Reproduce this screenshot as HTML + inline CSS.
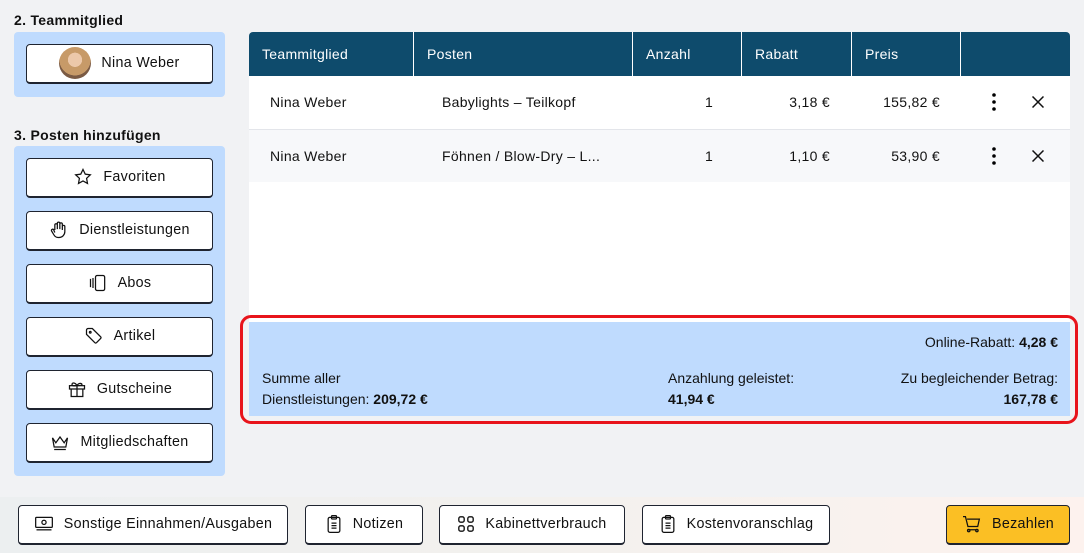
<!DOCTYPE html>
<html><head><meta charset="utf-8"><style>
*{box-sizing:border-box;margin:0;padding:0}
body{width:1084px;height:553px;background:#f1f2f4;font-family:"Liberation Sans",sans-serif;color:#111;position:relative;overflow:hidden;font-size:14px;letter-spacing:.3px}
.abs{position:absolute}
.h{font-weight:bold;font-size:14px}
.panel{background:#bfdbfe;border-radius:4px}
.btn{position:absolute;background:#fff;border:1px solid #1f2430;border-bottom-width:2px;border-radius:4px;display:flex;align-items:center;justify-content:center;gap:10px;font-size:14.3px;color:#111;padding-bottom:1px}
.btn svg{flex:none}
.th{position:absolute;top:32px;height:44px;color:#fff;font-size:14px;line-height:44px;padding-left:13px;border-right:1px solid #fff}
.cell{position:absolute;font-size:14px}
</style></head><body>
<div class="abs h" style="left:14px;top:12px">2. Teammitglied</div>
<div class="abs panel" style="left:14px;top:32px;width:211px;height:65px"></div>
<div class="btn" style="left:26px;top:44px;width:187px;height:40px">
<span style="width:32px;height:32px;border-radius:50%;background:radial-gradient(circle at 50% 40%,#ecc8aa 0 28%,#c79a68 29% 62%,#7a5a44 63%);display:inline-block"></span>Nina Weber</div>

<div class="abs h" style="left:14px;top:127px">3. Posten hinzufügen</div>
<div class="abs panel" style="left:14px;top:146px;width:211px;height:330px"></div>
<div class="btn" style="left:26px;top:158px;width:187px;height:40px"><svg width="20" height="20" viewBox="0 0 24 24" fill="none" stroke="#111" stroke-width="1.5"><path d="M12 3l2.7 5.6 6.1.8-4.5 4.2 1.1 6.1L12 16.8 6.6 19.7l1.1-6.1L3.2 9.4l6.1-.8z"/></svg>Favoriten</div>
<div class="btn" style="left:26px;top:211px;width:187px;height:40px"><svg width="20" height="20" viewBox="0 0 24 24" fill="none" stroke="#111" stroke-width="1.5"><path d="M7 12V6a1.5 1.5 0 013 0v5V4a1.5 1.5 0 013 0v7V5a1.5 1.5 0 013 0v7V8a1.5 1.5 0 013 0v6a7 7 0 01-7 7h-1a6 6 0 01-5-3l-3-5a1.5 1.5 0 012.5-1.5L7 15"/></svg>Dienstleistungen</div>
<div class="btn" style="left:26px;top:264px;width:187px;height:40px"><svg width="20" height="20" viewBox="0 0 24 24" fill="none" stroke="#111" stroke-width="1.5"><path d="M3 7v10M6 6v12"/><rect x="9" y="3" width="11" height="18" rx="2"/></svg>Abos</div>
<div class="btn" style="left:26px;top:317px;width:187px;height:40px"><svg width="20" height="20" viewBox="0 0 24 24" fill="none" stroke="#111" stroke-width="1.5"><path d="M3 5v5l10 10a1.5 1.5 0 002 0l5-5a1.5 1.5 0 000-2L10 3H5a2 2 0 00-2 2z"/><circle cx="7.5" cy="7.5" r="1"/></svg>Artikel</div>
<div class="btn" style="left:26px;top:370px;width:187px;height:40px"><svg width="20" height="20" viewBox="0 0 24 24" fill="none" stroke="#111" stroke-width="1.5"><rect x="3" y="8" width="18" height="4"/><path d="M5 12v9h14v-9M12 8v13M12 8c-2-4-6-4-6-1.5S10 8 12 8c2 0 6 0 6-1.5S14 4 12 8"/></svg>Gutscheine</div>
<div class="btn" style="left:26px;top:423px;width:187px;height:40px"><svg width="20" height="20" viewBox="0 0 24 24" fill="none" stroke="#111" stroke-width="1.5"><path d="M3 7l4 6 5-7 5 7 4-6-2 11H5zM5 21h14"/></svg>Mitgliedschaften</div>

<div class="abs" style="left:249px;top:32px;width:821px;height:384px;background:#fff;border-radius:4px 4px 0 0;overflow:hidden"></div>
<div class="abs" style="left:249px;top:32px;width:821px;height:44px;background:#0e4b6c;border-radius:4px 4px 0 0"></div>
<div class="th" style="left:249px;width:165px">Teammitglied</div>
<div class="th" style="left:414px;width:219px">Posten</div>
<div class="th" style="left:633px;width:109px">Anzahl</div>
<div class="th" style="left:742px;width:110px">Rabatt</div>
<div class="th" style="left:852px;width:109px">Preis</div>
<div class="abs" style="left:249px;top:129px;width:821px;height:53px;background:#f7f8fa;border-top:1px solid #e3e5ea"></div>
<div class="cell" style="left:270px;top:94px">Nina Weber</div>
<div class="cell" style="left:442px;top:94px">Babylights – Teilkopf</div>
<div class="cell" style="left:705px;top:94px">1</div>
<div class="cell" style="left:762px;top:94px;width:68px;text-align:right">3,18 €</div>
<div class="cell" style="left:850px;top:94px;width:90px;text-align:right">155,82 €</div>
<div class="cell" style="left:270px;top:148px">Nina Weber</div>
<div class="cell" style="left:442px;top:148px">Föhnen / Blow-Dry – L...</div>
<div class="cell" style="left:705px;top:148px">1</div>
<div class="cell" style="left:762px;top:148px;width:68px;text-align:right">1,10 €</div>
<div class="cell" style="left:850px;top:148px;width:90px;text-align:right">53,90 €</div>
<svg class="abs" style="left:986px;top:92px" width="16" height="20"><circle cx="8" cy="3" r="1.8"/><circle cx="8" cy="10" r="1.8"/><circle cx="8" cy="17" r="1.8"/></svg>
<svg class="abs" style="left:986px;top:146px" width="16" height="20"><circle cx="8" cy="3" r="1.8"/><circle cx="8" cy="10" r="1.8"/><circle cx="8" cy="17" r="1.8"/></svg>
<svg class="abs" style="left:1032px;top:96px" width="12" height="12" stroke="#111" stroke-width="1.5"><path d="M.5 .5l11 11M11.5 .5l-11 11"/></svg>
<svg class="abs" style="left:1032px;top:150px" width="12" height="12" stroke="#111" stroke-width="1.5"><path d="M.5 .5l11 11M11.5 .5l-11 11"/></svg>

<div class="abs" style="left:249px;top:322px;width:821px;height:94px;background:#bfdbfe"></div>
<div class="abs" style="left:240px;top:315px;width:838px;height:109px;border:3px solid #e8141b;border-radius:11px"></div>
<div class="cell" style="left:800px;top:334px;width:258px;text-align:right;letter-spacing:0">Online-Rabatt: <b>4,28 €</b></div>
<div class="cell" style="left:262px;top:368px;line-height:21px;letter-spacing:0">Summe aller<br>Dienstleistungen: <b>209,72 €</b></div>
<div class="cell" style="left:668px;top:368px;line-height:21px;letter-spacing:0">Anzahlung geleistet:<br><b>41,94 €</b></div>
<div class="cell" style="left:830px;top:368px;width:228px;text-align:right;line-height:21px;letter-spacing:0">Zu begleichender Betrag:<br><b>167,78 €</b></div>

<div class="abs" style="left:0;top:497px;width:1084px;height:56px;background:linear-gradient(90deg,#eceff0,#f3f1ee 50%,#fdf2ee)"></div>
<div class="btn" style="left:18px;top:505px;width:270px;height:40px"><svg width="20" height="18" viewBox="0 0 24 20" fill="none" stroke="#111" stroke-width="1.5"><rect x="2" y="2" width="20" height="12" rx="1"/><circle cx="12" cy="8" r="2.5"/><path d="M3 17h18"/></svg>Sonstige Einnahmen/Ausgaben</div>
<div class="btn" style="left:305px;top:505px;width:118px;height:40px"><svg width="18" height="20" viewBox="0 0 20 24" fill="none" stroke="#111" stroke-width="1.5"><rect x="3" y="4" width="14" height="18" rx="2"/><rect x="7" y="2" width="6" height="4" rx="1"/><path d="M7 11h6M7 14h6M7 17h6"/></svg>Notizen</div>
<div class="btn" style="left:439px;top:505px;width:186px;height:40px"><svg width="18" height="18" viewBox="0 0 20 20" fill="none" stroke="#111" stroke-width="1.5"><rect x="2" y="2" width="6" height="6" rx="2"/><rect x="12" y="2" width="6" height="6" rx="2"/><rect x="2" y="12" width="6" height="6" rx="2"/><rect x="12" y="12" width="6" height="6" rx="2"/></svg>Kabinettverbrauch</div>
<div class="btn" style="left:642px;top:505px;width:188px;height:40px"><svg width="18" height="20" viewBox="0 0 20 24" fill="none" stroke="#111" stroke-width="1.5"><rect x="3" y="4" width="14" height="18" rx="2"/><rect x="7" y="2" width="6" height="4" rx="1"/><path d="M7 11h6M7 14h6M7 17h6"/></svg>Kostenvoranschlag</div>
<div class="btn" style="left:946px;top:505px;width:124px;height:40px;background:#fbbf24"><svg width="20" height="18" viewBox="0 0 24 22" fill="none" stroke="#111" stroke-width="1.5"><path d="M1 2h3l3 12h12l2-9H6M7 18h12"/><circle cx="8" cy="19" r="1.5"/><circle cx="18" cy="19" r="1.5"/></svg>Bezahlen</div>
</body></html>
